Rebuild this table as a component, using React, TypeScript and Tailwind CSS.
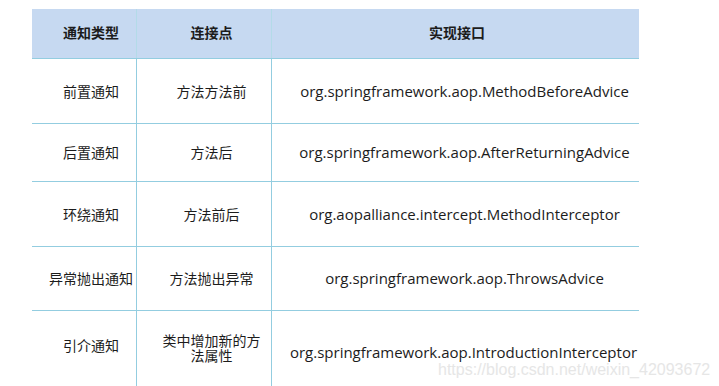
const rows = [
  { type: '前置通知', point: '方法方法前', api: 'org.springframework.aop.MethodBeforeAdvice', h: 'h-[65px]' },
  { type: '后置通知', point: '方法后', api: 'org.springframework.aop.AfterReturningAdvice', h: 'h-[58px]' },
  { type: '环绕通知', point: '方法前后', api: 'org.aopalliance.intercept.MethodInterceptor', h: 'h-[65px]' },
  { type: '异常抛出通知', point: '方法抛出异常', api: 'org.springframework.aop.ThrowsAdvice', h: 'h-[64px]' },
];

export default function App() {
  return (
    <div
      className="relative w-[719px] h-[386px] overflow-hidden bg-white text-[14px] text-[#1c1c1c]"
      style={{ fontFamily: '"Open Sans", "Noto Sans CJK SC", sans-serif' }}
    >
      <div className="ml-[32px] mt-[9px] w-[607px]">
        <div className="grid grid-cols-[105px_135px_367px] h-[50px] bg-[#c6d9f1] font-bold border-b border-[#93cde0]">
          <div className="flex items-center justify-center pl-[14px] pb-[3px] border-r border-[#b3dbe8]">通知类型</div>
          <div className="flex items-center justify-center pl-[15px] pb-[3px] border-r border-[#b3dbe8]">连接点</div>
          <div className="flex items-center justify-center pl-[3px] pb-[3px]">实现接口</div>
        </div>
        {rows.map((r) => (
          <div key={r.type} className={`grid grid-cols-[105px_135px_367px] ${r.h} border-b border-[#93cde0]`}>
            <div className="flex items-center justify-center pl-[14px] border-r border-[#93cde0]">{r.type}</div>
            <div className="flex items-center justify-center pl-[15px] border-r border-[#93cde0]">{r.point}</div>
            <div className="flex items-center justify-center pl-[18px] text-[15px]">{r.api}</div>
          </div>
        ))}
        <div className="grid grid-cols-[105px_135px_367px] h-[80px]">
          <div className="flex items-start justify-center pl-[14px] pt-[24px] border-r border-[#93cde0]">引介通知</div>
          <div className="flex items-start justify-center pl-[15px] pt-[22px] border-r border-[#93cde0] text-center leading-[15px]">
            <span className="w-[100px]">类中增加新的方法属性</span>
          </div>
          <div className="flex items-start justify-center pl-[16px] pt-[30px] text-[15px]">org.springframework.aop.IntroductionInterceptor</div>
        </div>
      </div>
      <div
        className="absolute left-[438px] top-[358px] text-[16px] text-[#e6e6e6]"
        style={{ fontFamily: '"Liberation Sans", Arial, sans-serif' }}
      >
        https://blog.csdn.net/weixin_42093672
      </div>
    </div>
  );
}
